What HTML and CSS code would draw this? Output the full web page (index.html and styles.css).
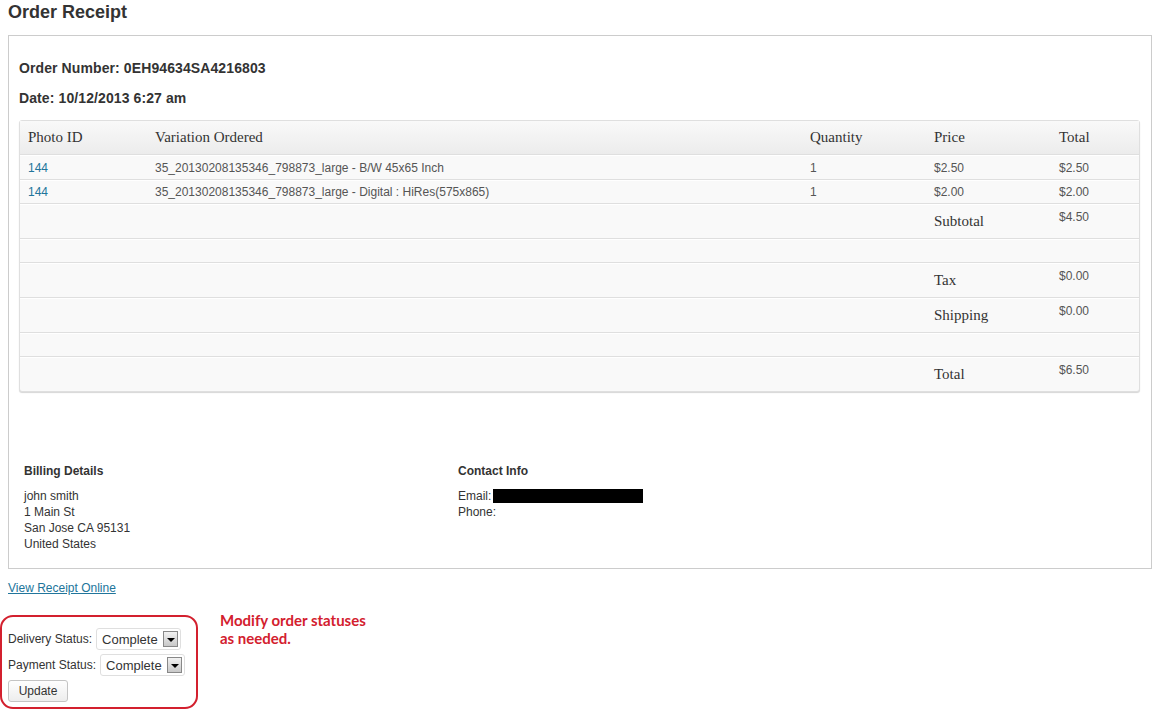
FILE: index.html
```html
<!DOCTYPE html>
<html>
<head>
<meta charset="utf-8">
<link rel="stylesheet" href="styles.css">
</head>
<body>
<h2 class="page-title">Order Receipt</h2>
<div class="receipt">
  <p class="meta meta-first">Order Number: 0EH94634SA4216803</p>
  <p class="meta">Date: 10/12/2013 6:27 am</p>
  <table class="items">
    <colgroup>
      <col class="c1"><col class="c2"><col class="c3"><col class="c4"><col class="c5">
    </colgroup>
    <thead>
      <tr><th>Photo ID</th><th>Variation Ordered</th><th>Quantity</th><th>Price</th><th>Total</th></tr>
    </thead>
    <tbody>
      <tr class="item first"><td><a href="#">144</a></td><td>35_20130208135346_798873_large - B/W 45x65 Inch</td><td>1</td><td>$2.50</td><td>$2.50</td></tr>
      <tr class="item"><td><a href="#">144</a></td><td>35_20130208135346_798873_large - Digital : HiRes(575x865)</td><td>1</td><td>$2.00</td><td>$2.00</td></tr>
      <tr class="sum"><td></td><td></td><td></td><td class="label">Subtotal</td><td class="val">$4.50</td></tr>
      <tr class="blank"><td colspan="5"></td></tr>
      <tr class="sum"><td></td><td></td><td></td><td class="label">Tax</td><td class="val">$0.00</td></tr>
      <tr class="sum"><td></td><td></td><td></td><td class="label">Shipping</td><td class="val">$0.00</td></tr>
      <tr class="blank"><td colspan="5"></td></tr>
      <tr class="sum"><td></td><td></td><td></td><td class="label">Total</td><td class="val">$6.50</td></tr>
    </tbody>
  </table>
  <div class="details">
    <div class="col billing">
      <h4>Billing Details</h4>
      <p>john smith<br>1 Main St<br>San Jose CA 95131<br>United States</p>
    </div>
    <div class="col contact">
      <h4>Contact Info</h4>
      <p>Email: <span class="redact"></span><br>Phone:</p>
    </div>
  </div>
</div>
<p class="online"><a href="#">View Receipt Online</a></p>
<div class="bottom">
  <form class="status-form">
    <div class="field">
      <span class="lbl">Delivery Status:</span>
      <span class="select">Complete<span class="arrow"></span></span>
    </div>
    <div class="field">
      <span class="lbl">Payment Status:</span>
      <span class="select">Complete<span class="arrow"></span></span>
    </div>
    <button type="button" class="btn">Update</button>
  </form>
  <p class="note">Modify order statuses<br>as needed.</p>
</div>
</body>
</html>
```
FILE: styles.css
```css
html, body {
  margin: 0;
  padding: 0;
  background: #fff;
}
body {
  padding-left: 8px;
  font-family: Arial, "Liberation Sans", sans-serif;
  font-size: 12px;
  color: #333;
}
.page-title {
  margin: 0;
  height: 35px;
  padding-top: 1px;
  box-sizing: border-box;
  font-size: 18px;
  line-height: 22px;
  font-weight: bold;
  color: #333;
}
.receipt {
  border: 1px solid #ccc;
  padding: 24px 11px 16px 10px;
}
.meta {
  margin: 0 0 14px 0;
  font-size: 14px;
  line-height: 16px;
  font-weight: bold;
  color: #333;
  letter-spacing: 0.1px;
}
.items {
  width: 100%;
  border-collapse: separate;
  border-spacing: 0;
  table-layout: fixed;
  border: 1px solid #dfdfdf;
  border-radius: 3px;
  background: #f9f9f9;
  box-shadow: 0 1px 1px #d6d6d6;
  margin-top: 6px;
}
.c1 { width: 127px; }
.c2 { width: 655px; }
.c3 { width: 124px; }
.c4 { width: 125px; }
.c5 { width: auto; }
.items th {
  height: 33px;
  padding: 0 0 0 8px;
  text-align: left;
  font-family: "Liberation Serif", Georgia, serif;
  font-weight: normal;
  font-size: 15px;
  color: #333;
  background: linear-gradient(#f9f9f9, #ececec);
  border-bottom: 1px solid #dfdfdf;
}
.items td {
  padding: 0 0 0 8px;
  border-top: 1px solid #fff;
  border-bottom: 1px solid #dfdfdf;
  color: #555;
  font-size: 12px;
}
.items tr:last-child td { border-bottom: none; }
.items tr.item td { height: 22px; }
.items tr.item.first td { height: 23px; }
.items a { color: #21759b; text-decoration: none; }
.items tr.sum td { height: 33px; vertical-align: top; }
.items tr.sum td.label {
  font-family: "Liberation Serif", Georgia, serif;
  font-size: 15px;
  line-height: 17px;
  color: #333;
  padding-top: 8px;
  height: 25px;
}
.items tr.sum td.val {
  padding-top: 5px;
  height: 28px;
  line-height: 15px;
}
.items tr.blank td { height: 22px; }
.details {
  display: flex;
  margin-top: 71px;
  padding-left: 5px;
}
.col h4 {
  margin: 0 0 9px 0;
  font-size: 12px;
  line-height: 16px;
  font-weight: bold;
  color: #333;
}
.col p {
  margin: 0;
  line-height: 16px;
  color: #333;
}
.billing { width: 434px; }
.redact {
  display: inline-block;
  width: 150px;
  height: 14px;
  background: #000;
  vertical-align: -3px;
  margin-left: -2px;
}
.online {
  margin: 12px 0 0 0;
  line-height: 14px;
}
.online a { color: #21759b; text-decoration: underline; }
.bottom {
  display: flex;
  align-items: flex-start;
  margin-top: 20px;
}
.status-form {
  margin: 0 0 0 -8px;
  width: 188px;
  height: 90px;
  border: 2px solid #d3202e;
  border-radius: 13px;
  padding: 0 0 0 6px;
}
.field {
  display: flex;
  align-items: center;
  height: 22px;
  margin-top: 4px;
  font-size: 12px;
  color: #333;
}
.field:first-child { margin-top: 11px; }
.lbl { margin-right: 4px; }
.select {
  display: inline-flex;
  align-items: center;
  height: 20px;
  padding: 0 2px 0 5px;
  border: 1px solid #dfdfdf;
  border-radius: 3px;
  background: #fff;
  font-size: 13px;
  color: #333;
}
.arrow {
  position: relative;
  width: 13px;
  height: 14px;
  margin-left: 5px;
  border: 1px solid #888;
  background: linear-gradient(#f2f2f2, #c8c8c8);
}
.arrow::after {
  content: "";
  position: absolute;
  left: 3px;
  top: 6px;
  border-left: 4px solid transparent;
  border-right: 4px solid transparent;
  border-top: 4px solid #000;
}
.btn {
  display: block;
  margin-top: 4px;
  height: 22px;
  width: 60px;
  padding: 0;
  border: 1px solid #c4c4c4;
  border-radius: 3px;
  background: linear-gradient(#fefefe, #ededed);
  font-family: Arial, "Liberation Sans", sans-serif;
  font-size: 12px;
  color: #333;
}
.note {
  margin: -4px 0 0 22px;
  font-family: Lato, "Open Sans", sans-serif;
  font-weight: bold;
  font-size: 15px;
  line-height: 18px;
  color: #d3202e;
}
```
